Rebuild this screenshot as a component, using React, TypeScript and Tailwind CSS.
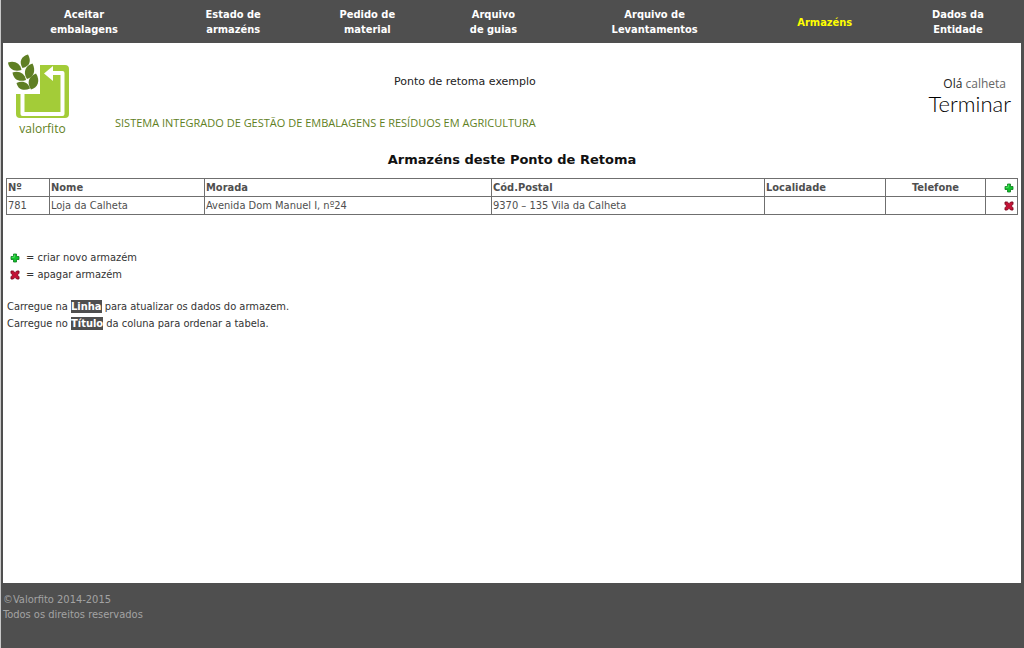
import { Fragment } from "react";

type NavItem = {
  lines: string[];
  active?: boolean;
};

const navItems: NavItem[] = [
  { lines: ["Aceitar", "embalagens"] },
  { lines: ["Estado de", "armazéns"] },
  { lines: ["Pedido de", "material"] },
  { lines: ["Arquivo", "de guias"] },
  { lines: ["Arquivo de", "Levantamentos"] },
  { lines: ["Armazéns"], active: true },
  { lines: ["Dados da", "Entidade"] },
];

const warehouses = [
  {
    id: 781,
    name: "Loja da Calheta",
    address: "Avenida Dom Manuel I, nº24",
    postalCode: "9370 – 135 Vila da Calheta",
    city: "",
    phone: "",
  },
];

function PlusIcon() {
  return (
    <svg viewBox="0 0 10 10" className="block size-[10px]" aria-hidden="true">
      <path
        d="M3.500 1h3v2.500H9v3H6.500V9h-3V6.500H1v-3h2.500z"
        fill="#12c32c"
        stroke="#0b7a1c"
        strokeWidth=".8"
        strokeLinejoin="round"
      />
      <path d="M4.300 1.700v2.600H1.700" fill="none" stroke="#62e873" strokeWidth=".8" />
    </svg>
  );
}

function CrossIcon() {
  return (
    <svg viewBox="0 0 10 10" className="block size-[10px]" aria-hidden="true">
      <path
        d="M1 1h2.300L5 2.700 6.700 1H9v2.200L7.300 5 9 6.800V9H6.700L5 7.300 3.300 9H1V6.800L2.700 5 1 3.200z"
        fill="#c41236"
        stroke="#7c0a20"
        strokeWidth=".9"
        strokeLinejoin="round"
      />
    </svg>
  );
}

function Logo() {
  return (
    <a href="#" className="block w-[70px] shrink-0 text-[#5f7f24]">
      <svg viewBox="0 0 70 66" className="block w-full" aria-hidden="true">
        {/* box */}
        <path
          d="M34 11h25a4 4 0 0 1 4 4v45a4 4 0 0 1-4 4H14a4 4 0 0 1-4-4V40h24z"
          fill="#a3cc38"
        />
        {/* arrow running round the inside */}
        <path
          d="M16.500 40v20H56.500V19H46"
          fill="none"
          stroke="#fff"
          strokeWidth="4"
          strokeLinejoin="round"
        />
        <path d="M38 19.500l9-7.500v15z" fill="#fff" />
        {/* branch */}
        <g fill="#5f7f24">
          <path d="M16.500 14C12.500 7 15.500 2.500 22 .5c3.500 6 2 12-5.500 13.500z" />
          <path d="M2 8.500c6.500-2 12 .5 13.500 7.500C8.500 18 3 15.500 2 8.500z" />
          <path d="M21 25C16.500 18.500 19.500 11.500 26.500 9.500c3.500 7 1.500 13.500-5.500 15.500z" />
          <path d="M6.500 18.500c6.500-2 12 .5 13.500 7.500-7 2.500-12.500-.5-13.500-7.500z" />
          <path d="M25 35.500c-4.500-6.500-2.500-13.500 5-16 4.500 7 2 14-5 16z" />
          <path d="M10.500 29c6-3 12-.5 13.500 5.500-6 3-12 1-13.500-5.500z" />
        </g>
      </svg>
      <span className="mt-px block pl-[3px] text-center font-['Open_Sans',sans-serif] text-[12px] leading-4">
        valorfito
      </span>
    </a>
  );
}

function NavBar() {
  return (
    <nav className="grid min-h-[43px] grid-cols-[166fr_132fr_136fr_116fr_206fr_134fr_132fr] items-center bg-[#4f4f4f] pt-px text-center text-[11px] leading-[15px] font-bold">
      {navItems.map(({ lines, active }) => (
        <a
          key={lines.join(" ")}
          href="#"
          className={active ? "text-[#ffff00]" : "text-white"}
        >
          {lines.map((line, i) => (
            <Fragment key={line}>
              {i > 0 && <br />}
              {line}
            </Fragment>
          ))}
        </a>
      ))}
    </nav>
  );
}

function WarehouseTable() {
  return (
    <table className="w-full table-fixed border-collapse border border-[#4f4f4f] text-left text-[11px] leading-[17px] text-[#4f4f4f] [&_td]:border [&_td]:border-[#6f6f6f] [&_td]:px-px [&_td]:py-0 [&_th]:border [&_th]:border-[#6f6f6f] [&_th]:px-px [&_th]:py-0">
      <colgroup>
        <col className="w-[43px]" />
        <col className="w-[155px]" />
        <col />
        <col className="w-[273px]" />
        <col className="w-[121px]" />
        <col className="w-[100px]" />
        <col className="w-[32px]" />
      </colgroup>
      <thead>
        <tr>
          <th>Nº</th>
          <th>Nome</th>
          <th>Morada</th>
          <th>Cód.Postal</th>
          <th>Localidade</th>
          <th className="text-center">Telefone</th>
          <th>
            <button type="button" aria-label="criar novo armazém" className="mr-[2px] ml-auto block">
              <PlusIcon />
            </button>
          </th>
        </tr>
      </thead>
      <tbody>
        {warehouses.map((w) => (
          <tr key={w.id}>
            <td>{w.id}</td>
            <td>{w.name}</td>
            <td>{w.address}</td>
            <td>{w.postalCode}</td>
            <td>{w.city}</td>
            <td>{w.phone}</td>
            <td>
              <button type="button" aria-label="apagar armazém" className="mr-[2px] ml-auto block">
                <CrossIcon />
              </button>
            </td>
          </tr>
        ))}
      </tbody>
    </table>
  );
}

export default function App() {
  return (
    <div className="flex min-h-screen flex-col border-l border-[#c8c8c8] bg-[#4f4f4f] font-['DejaVu_Sans_Condensed','DejaVu_Sans',sans-serif]">
      <NavBar />

      <main className="mr-[3px] ml-[2px] flex-1 bg-white px-[3px]">
        <header className="flex items-start pt-[11px]">
          <Logo />
          <div className="ml-[39px] flex flex-col items-end pt-5">
            <p className="font-['DejaVu_Sans',sans-serif] text-[11px] leading-4 text-[#222]">
              Ponto de retoma exemplo
            </p>
            <p className="mt-[25px] font-['Open_Sans',sans-serif] text-[11px] leading-4 text-[#5f7f24]">
              SISTEMA INTEGRADO DE GESTÃO DE EMBALAGENS E RESÍDUOS EM AGRICULTURA
            </p>
          </div>
          <div className="mr-[7px] ml-auto flex flex-col items-end pt-[22px]">
            <p className="mr-[5px] font-['Open_Sans',sans-serif] text-[12px] leading-4 text-[#666]">
              <span className="text-[#222]">Olá</span> calheta
            </p>
            <a
              href="#"
              className="font-['Lato',sans-serif] text-[22px] leading-6 font-light text-black"
            >
              Terminar
            </a>
          </div>
        </header>

        <h1 className="mt-[13px] mb-2 text-center font-['DejaVu_Sans',sans-serif] text-[13px] leading-5 font-bold text-[#111]">
          Armazéns deste Ponto de Retoma
        </h1>

        <WarehouseTable />

        <section className="mt-[34px] px-px text-[11px] leading-[17px] text-[#333]">
          <ul className="pl-[3px]">
            <li className="flex items-center gap-[6px]">
              <PlusIcon />= criar novo armazém
            </li>
            <li className="flex items-center gap-[6px]">
              <CrossIcon />= apagar armazém
            </li>
          </ul>
          <p className="mt-[15px]">
            Carregue na <b className="bg-[#4f4f4f] text-white">Linha</b> para atualizar os dados do
            armazem.
          </p>
          <p>
            Carregue no <b className="bg-[#4f4f4f] text-white">Título</b> da coluna para ordenar a
            tabela.
          </p>
        </section>
      </main>

      <footer className="h-[65px] px-[2px] pt-[9px] text-[11px] leading-[15px] text-[#a3a3a3]">
        <p>©Valorfito 2014-2015</p>
        <p>Todos os direitos reservados</p>
      </footer>
    </div>
  );
}
